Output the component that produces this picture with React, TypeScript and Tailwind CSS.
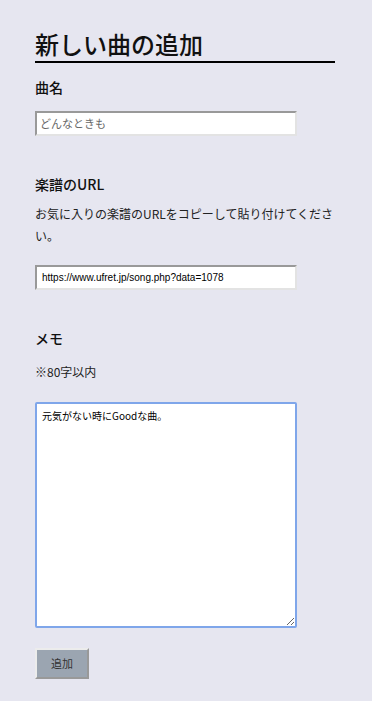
const jp = "font-['Noto_Sans_CJK_JP','Noto_Sans',sans-serif]";

export default function App() {
  return (
    <div className={`min-h-[701px] bg-[#e6e6f0] text-[#111] ${jp}`}>
      <div className="w-[300px] ml-[35px] pt-[28px]">
        <h1 className="text-[24px] leading-[32px] font-medium border-b-2 border-black pb-[1px]">
          新しい曲の追加
        </h1>

        <h2 className="mt-[14px] text-[14px] leading-[20px] font-medium">曲名</h2>
        <input
          className="mt-[14px] block w-[262px] h-[25px] bg-white border-2 border-t-[#999] border-l-[#999] border-b-[#e3e3e3] border-r-[#e3e3e3] px-[3px] text-[11px] font-['Liberation_Sans',sans-serif] placeholder:text-[#666] placeholder:font-['Noto_Sans_CJK_JP',sans-serif] outline-none"
          placeholder="どんなときも"
        />

        <h2 className="mt-[38px] text-[14px] leading-[20px] font-medium">楽譜のURL</h2>
        <p className="mt-[9px] text-[12px] leading-[22px] text-[#222]">
          お気に入りの楽譜のURLをコピーして貼り付けてください。
        </p>
        <input
          className="mt-[18px] block w-[262px] h-[25px] bg-white border-2 border-t-[#999] border-l-[#999] border-b-[#e3e3e3] border-r-[#e3e3e3] px-[5px] text-[10px] text-black font-['Liberation_Sans',sans-serif] outline-none"
          defaultValue="https://www.ufret.jp/song.php?data=1078"
        />

        <h2 className="mt-[38px] text-[14px] leading-[20px] font-medium">メモ</h2>
        <p className="mt-[14px] text-[12px] leading-[20px] text-[#222]">※80字以内</p>
        <textarea
          autoFocus
          onFocus={(e) => {
            const len = e.currentTarget.value.length;
            e.currentTarget.setSelectionRange(len, len);
          }}
          className="mt-[20px] block w-[262px] h-[226px] bg-white border-2 border-[#7fa6ea] rounded-[2px] px-[5px] py-[4px] text-[10px] leading-[16px] text-black caret-black resize outline-none"
          defaultValue="元気がない時にGoodな曲。"
        />

        <button className="mt-[20px] block w-[54px] h-[31px] bg-[#9ba5b1] border-2 border-t-[#ececec] border-l-[#ececec] border-b-[#999] border-r-[#999] text-[11px] text-[#333]">
          追加
        </button>
      </div>
    </div>
  );
}
